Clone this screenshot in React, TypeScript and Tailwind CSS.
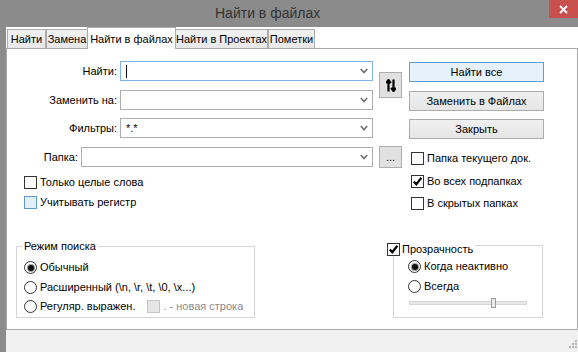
import React from "react";

const FONT = { fontFamily: '"Liberation Sans", Arial, sans-serif' };

function Chevron() {
  return (
    <svg width="8" height="6" viewBox="0 0 8 6" className="shrink-0">
      <path d="M0.8 1 L4 4.6 L7.2 1" fill="none" stroke="#707070" strokeWidth="1.6" />
    </svg>
  );
}

function Combo({ width, focused, children }: { width: number; focused?: boolean; children?: React.ReactNode }) {
  return (
    <div
      className={`h-[20px] flex items-center justify-between pl-[5px] pr-[4px] bg-white border ${focused ? "border-[#7eb4ea]" : "border-[#abadb3]"}`}
      style={{ width }}
    >
      <div className="flex items-center text-[11px] text-black">{children}</div>
      <Chevron />
    </div>
  );
}

function FieldRow({ label, width, focused, children, className = "" }: { label: string; width: number; focused?: boolean; children?: React.ReactNode; className?: string }) {
  return (
    <div className={`h-[20px] flex items-center justify-end gap-[3px] ${className}`}>
      <span className="text-[11px] text-black whitespace-nowrap">{label}</span>
      <Combo width={width} focused={focused}>{children}</Combo>
    </div>
  );
}

function Check({ checked, hover, disabled }: { checked?: boolean; hover?: boolean; disabled?: boolean }) {
  const cls = disabled
    ? "border-[#c4c4c4] bg-[#e6e6e6]"
    : hover
    ? "border-[#5a9ad6] bg-[#e3effb]"
    : "border-[#333333] bg-white";
  return (
    <div className={`w-[13px] h-[13px] border shrink-0 flex items-center justify-center ${cls}`}>
      {checked && (
        <svg width="11" height="11" viewBox="0 0 11 11">
          <path d="M1.8 5.6 L4.3 8.3 L9.4 1.8" fill="none" stroke="#000" strokeWidth="2.2" />
        </svg>
      )}
    </div>
  );
}

function CheckRow({ label, checked, hover, className = "" }: { label: string; checked?: boolean; hover?: boolean; className?: string }) {
  return (
    <div className={`h-[13px] flex items-center gap-[3px] ${className}`}>
      <Check checked={checked} hover={hover} />
      <span className="text-[11px] text-black leading-none whitespace-nowrap">{label}</span>
    </div>
  );
}

function Radio({ selected }: { selected?: boolean }) {
  return (
    <div className="w-[13px] h-[13px] rounded-full border border-[#333333] bg-white shrink-0 flex items-center justify-center">
      {selected && <div className="w-[6px] h-[6px] rounded-full bg-[#111] shadow-[0_0_0_1px_#9a9a9a]" />}
    </div>
  );
}

function RadioRow({ label, selected, className = "", children }: { label: string; selected?: boolean; className?: string; children?: React.ReactNode }) {
  return (
    <div className={`h-[13px] flex items-center gap-[3px] ${className}`}>
      <Radio selected={selected} />
      <span className="text-[11px] text-black leading-none whitespace-nowrap">{label}</span>
      {children}
    </div>
  );
}

function Button({ label, primary, className = "" }: { label: string; primary?: boolean; className?: string }) {
  return (
    <div
      className={`h-[20px] w-[135px] flex items-center justify-center text-[11px] text-black border ${
        primary ? "border-[#5d9cd8] bg-[#e5f1fb]" : "border-[#acacac] bg-gradient-to-b from-[#f0f0f0] to-[#e5e5e5]"
      } ${className}`}
    >
      {label}
    </div>
  );
}

function Tab({ label, width, active }: { label: string; width: number; active?: boolean }) {
  if (active) {
    return (
      <div
        className="relative z-10 h-[22px] -mb-px -mx-px bg-white border border-b-0 border-[#acacac] flex items-start justify-center pt-[3px] text-[11px] text-black whitespace-nowrap"
        style={{ width }}
      >
        {label}
      </div>
    );
  }
  return (
    <div
      className="h-[19px] bg-gradient-to-b from-[#f2f2f2] to-[#e8e8e8] border border-b-0 border-[#acacac] flex items-center justify-center text-[11px] text-black whitespace-nowrap"
      style={{ width }}
    >
      {label}
    </div>
  );
}

export default function App() {
  return (
    <div className="w-[578px] h-[352px] overflow-hidden bg-[#8b8b8b] flex flex-col" style={FONT}>
      {/* title bar */}
      <div className="h-[27px] flex items-start shrink-0">
        <div className="flex-1 h-[26px] flex items-center pl-[215px] text-[14px] text-[#333333]">
          Найти в файлах
        </div>
        <div className="w-[29px] h-[18px] bg-[#c9504e] flex items-center justify-center">
          <svg width="9" height="9" viewBox="0 0 9 9">
            <path d="M1 1 L8 8 M8 1 L1 8" stroke="#fff" strokeWidth="1.8" />
          </svg>
        </div>
      </div>

      <div className="flex-1 ml-[6px] flex flex-col bg-[#f0f0f0]">
        {/* tabs */}
        <div className="h-[21px] flex items-end pl-[1px] bg-white">
          <Tab label="Найти" width={39} />
          <Tab label="Замена" width={42} />
          <Tab label="Найти в файлах" width={89} active />
          <Tab label="Найти в Проектах" width={93} />
          <Tab label="Пометки" width={47} />
        </div>

        {/* panel */}
        <div className="h-[282px] bg-white border border-[#acacac] pt-[12px] pl-[9px] flex flex-col">
          <div className="flex ml-[4px]">
            <div className="flex flex-col w-[353px]">
              <FieldRow label="Найти:" width={253} focused>
                <div className="w-px h-[13px] bg-black" />
              </FieldRow>
              <FieldRow label="Заменить на:" width={253} className="mt-[9px]" />
              <FieldRow label="Фильтры:" width={253} className="mt-[8px]">*.*</FieldRow>
              <FieldRow label="Папка:" width={292} className="mt-[9px]" />
              <CheckRow label="Только целые слова" className="mt-[9px] ml-[4px]" />
              <CheckRow label="Учитывать регистр" hover className="mt-[7px] ml-[4px]" />
            </div>

            <div className="flex flex-col w-[23px] ml-[6px]">
              <div className="mt-[11px] h-[26px] border border-[#adadad] bg-[#e1e1e1] flex items-center justify-center">
                <svg width="10" height="13" viewBox="0 0 10 13">
                  <path d="M2.5 12.5 V2 M0.2 4.2 L2.5 1 L4.8 4.2" fill="none" stroke="#000" strokeWidth="2.2" />
                  <path d="M7.5 0.5 V11 M5.2 8.8 L7.5 12 L9.8 8.8" fill="none" stroke="#000" strokeWidth="2.2" />
                </svg>
              </div>
              <div className="mt-[48px] h-[22px] border border-[#adadad] bg-[#e1e1e1] flex items-end justify-center pb-[4px] text-[11px] leading-none text-black">
                ...
              </div>
            </div>

            <div className="flex flex-col w-[135px] ml-[7px] mt-[1px]">
              <Button label="Найти все" primary />
              <Button label="Заменить в Файлах" className="mt-[9px]" />
              <Button label="Закрыть" className="mt-[8px]" />
              <CheckRow label="Папка текущего док." className="mt-[13px] ml-[2px]" />
              <CheckRow label="Во всех подпапках" checked className="mt-[10px] ml-[2px]" />
              <CheckRow label="В скрытых папках" className="mt-[9px] ml-[2px]" />
            </div>
          </div>

          {/* groups */}
          <div className="flex items-start mt-[35px]">
            <div className="relative mt-[1px] w-[239px] h-[72px] border border-[#d5d5d5] pt-[14px] pl-[7px]">
              <div className="absolute left-[5px] -top-[7px] bg-white px-[2px] text-[11px] leading-[13px] text-black whitespace-nowrap">Режим поиска</div>
              <RadioRow label="Обычный" selected />
              <RadioRow label="Расширенный (\n, \r, \t, \0, \x...)" className="mt-[7px]" />
              <RadioRow label="Регуляр. выражен." className="mt-[6px]">
                <div className="ml-[9px] flex items-center gap-[3px]">
                  <Check disabled />
                  <span className="text-[11px] leading-none text-[#8a8a8a] whitespace-nowrap">. - новая строка</span>
                </div>
              </RadioRow>
            </div>

            <div className="relative ml-[138px] w-[150px] h-[73px] border border-[#d5d5d5] pt-[14px] pl-[14px]">
              <div className="absolute -left-[7px] -top-[3px] bg-white pr-[2px] flex items-center gap-[2px]">
                <Check checked />
                <span className="text-[11px] leading-none text-black whitespace-nowrap">Прозрачность</span>
              </div>
              <RadioRow label="Когда неактивно" selected />
              <RadioRow label="Всегда" className="mt-[7px]" />
              <div className="mt-[5px] ml-[1px] w-[118px] h-[10px] flex items-center">
                <div className="w-[82px] h-[4px] bg-[#e7e7e7] border-y border-l border-[#d6d6d6]" />
                <div className="w-[5px] h-[10px] border border-[#9c9c9c] bg-[#ececec]" />
                <div className="flex-1 h-[4px] bg-[#e7e7e7] border-y border-r border-[#d6d6d6]" />
              </div>
            </div>
          </div>
        </div>

        {/* bottom */}
        <div className="flex-1 flex items-end justify-end pr-[1px] pb-[2px]">
          <svg width="10" height="10" viewBox="0 0 10 10">
            <g fill="#b5b5b5">
              <rect x="8" y="0" width="2" height="2" />
              <rect x="5" y="3" width="2" height="2" />
              <rect x="8" y="3" width="2" height="2" />
              <rect x="2" y="6" width="2" height="2" />
              <rect x="5" y="6" width="2" height="2" />
              <rect x="8" y="6" width="2" height="2" />
            </g>
          </svg>
        </div>
      </div>
    </div>
  );
}
